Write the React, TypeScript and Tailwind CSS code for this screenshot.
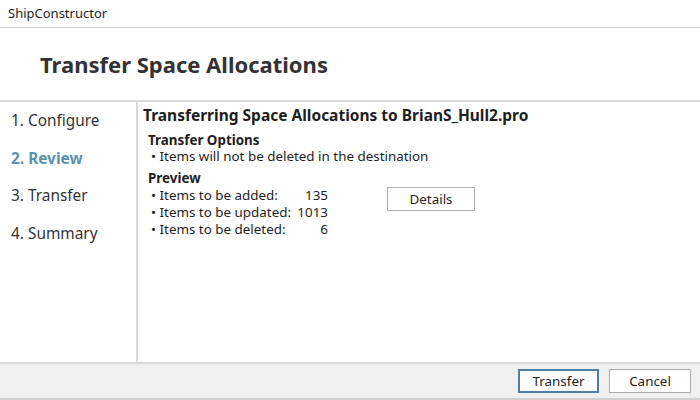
const steps = ["1. Configure", "2. Review", "3. Transfer", "4. Summary"];

const preview = [
  { label: "Items to be added:", value: "135" },
  { label: "Items to be updated:", value: "1013" },
  { label: "Items to be deleted:", value: "6" },
];

const App = () => {
  return (
    <div className="w-[700px] h-[400px] flex flex-col bg-white text-[#1e1e1e] font-['Noto_Sans',sans-serif] overflow-hidden">
      {/* Title bar */}
      <div className="h-[28px] flex items-center px-[8px] text-[13px] border-b border-[#cfcfcf]">
        ShipConstructor
      </div>

      {/* Header */}
      <div className="h-[74px] flex items-center pl-[40px] border-b-2 border-[#d9d9d9]">
        <h1 className="text-[22px] font-bold text-[#333]">Transfer Space Allocations</h1>
      </div>

      {/* Body */}
      <div className="flex flex-1">
        <div className="w-[138px] border-r-2 border-[#d9d9d9] pl-[11px] flex flex-col">
          {steps.map((s, i) => (
            <div
              key={s}
              className={
                i === 1
                  ? "h-[37.5px] flex items-center text-[15.4px] font-bold text-[#5b93ad]"
                  : "h-[37.5px] flex items-center text-[15.4px] text-[#333]"
              }
            >
              {s}
            </div>
          ))}
        </div>

        <div className="flex-1 pl-[5px] pt-[4px]">
          <div className="text-[15.5px] font-bold leading-[18px]">
            Transferring Space Allocations to BrianS_Hull2.pro
          </div>
          <div className="pl-[5px] mt-[8px] text-[13.4px] leading-[16px]">
            <div className="font-bold">Transfer Options</div>
            <div className="pl-[3px]">• Items will not be deleted in the destination</div>

            <div className="font-bold mt-[6px]">Preview</div>
            <div className="flex items-start">
              <div className="pl-[3px] flex flex-col">
                {preview.map((p) => (
                  <div key={p.label} className="flex h-[17px] items-center whitespace-nowrap">
                    <span className="w-[141px]">• {p.label}</span>
                    <span className="w-[36px] text-right">{p.value}</span>
                  </div>
                ))}
              </div>
              <button className="ml-[59px] mt-[1px] w-[88px] h-[24px] border border-[#adadad] bg-white text-[13.4px]">
                Details
              </button>
            </div>
          </div>
        </div>
      </div>

      {/* Footer */}
      <div className="h-[38px] bg-[#f0f0f0] border-t-2 border-[#d9d9d9] border-b-2 border-b-[#cfcfcf] flex items-center justify-end gap-[10px] pr-[9px]">
        <button className="w-[81px] h-[24px] border-2 border-[#4e7fa6] bg-white text-[13.4px]">
          Transfer
        </button>
        <button className="w-[82px] h-[24px] border border-[#adadad] bg-white text-[13.4px]">
          Cancel
        </button>
      </div>
    </div>
  );
};

export default App;
